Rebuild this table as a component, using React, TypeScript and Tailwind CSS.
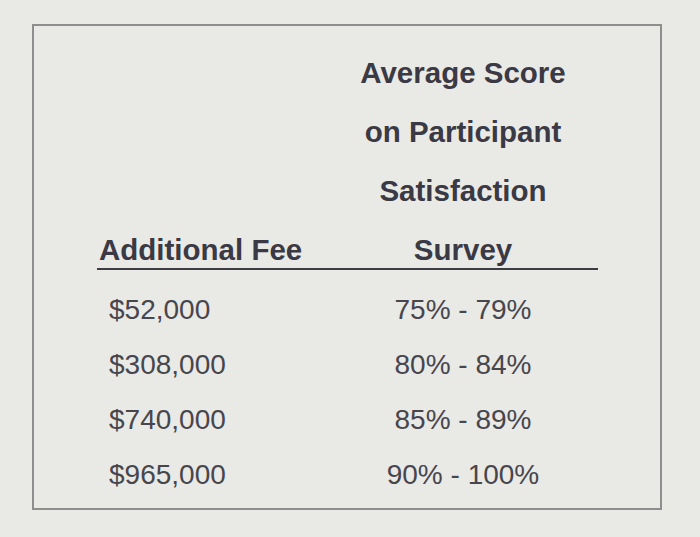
import React from "react";

const rows = [
  { fee: "$52,000", score: "75% - 79%" },
  { fee: "$308,000", score: "80% - 84%" },
  { fee: "$740,000", score: "85% - 89%" },
  { fee: "$965,000", score: "90% - 100%" },
];

export default function App() {
  return (
    <div
      className="w-[700px] h-[537px] bg-[#e9e9e6] pt-[24px] pl-[32px] overflow-hidden"
      style={{ fontFamily: '"Liberation Sans", Arial, sans-serif' }}
    >
      <div className="w-[630px] h-[486px] border-2 border-[#8e8e8e] pt-[29px] pl-[63px]">
        <div className="w-[501px]">
          {/* header */}
          <div className="flex items-end border-b-2 border-[#3e3d44] font-bold text-[29.5px] text-[#3a3944]">
            <div className="w-[231px] pl-[2px] leading-[36px]">Additional Fee</div>
            <div className="flex-1 flex flex-col items-center gap-[23px] leading-[36px]">
              <span>Average Score</span>
              <span>on Participant</span>
              <span>Satisfaction</span>
              <span>Survey</span>
            </div>
          </div>

          {/* rows */}
          <div className="pt-[12px] text-[28px] text-[#47464d]">
            {rows.map((row) => (
              <div key={row.fee} className="flex items-center h-[55px]">
                <div className="w-[231px] pl-[12px]">{row.fee}</div>
                <div className="flex-1 text-center">{row.score}</div>
              </div>
            ))}
          </div>
        </div>
      </div>
    </div>
  );
}
